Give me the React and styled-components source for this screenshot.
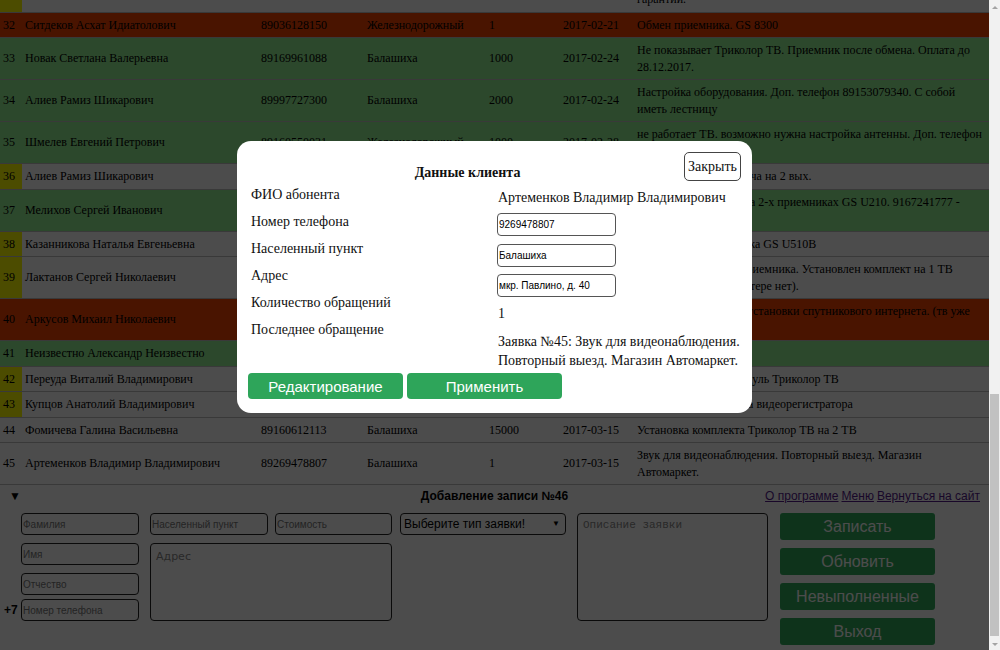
import React from 'react';
import styled, { createGlobalStyle } from 'styled-components';

const GlobalStyle = createGlobalStyle`
  html, body { height: 100%; overflow: hidden; }
  body {
    margin: 0;
    background: #fff;
    color: #000;
    font-family: "Liberation Serif", "Times New Roman", serif;
  }
  #root { height: 100%; }
`;

const ROW_BG = {
  w: '#ffffff',
  r: '#f64300',
  g: '#95f295',
};

const data = [
  ['Борисов Геннадий Иванович', '89261119988', 'Железнодорожный', '2500', '2017-02-15', 'Замена конвертора и разъемов. Доп. телефон 89167770011. Домофон не работает, звонить.', 'g', false],
  ['Григорьев Антон Николаевич', '89030001122', 'Балашиха', '1000', '2017-02-17', 'Не включается приемник. Горит красный индикатор, возможно неисправен блок питания.', 'g', false],
  ['Гусейнов Рустам Алиевич', '89031112233', 'Балашиха', '0', '2017-02-20', 'Не включается приемник. Отвезти в сервисный центр. Ремонт по гарантии.', 'w', true],
  ['Ситдеков Асхат Идиатолович', '89036128150', 'Железнодорожный', '1', '2017-02-21', 'Обмен приемника. GS 8300', 'r', false],
  ['Новак Светлана Валерьевна', '89169961088', 'Балашиха', '1000', '2017-02-24', 'Не показывает Триколор ТВ. Приемник после обмена. Оплата до 28.12.2017.', 'g', false],
  ['Алиев Рамиз Шикарович', '89997727300', 'Балашиха', '2000', '2017-02-24', 'Настройка оборудования. Доп. телефон 89153079340. С собой иметь лестницу', 'g', false],
  ['Шмелев Евгений Петрович', '89160550031', 'Железнодорожный', '1000', '2017-02-28', 'не работает ТВ. возможно нужна настройка антенны. Доп. телефон 89160550001', 'g', false],
  ['Алиев Рамиз Шикарович', '89997727300', 'Балашиха', '2000', '2017-03-01', 'Установка мультисвитча на 2 вых.', 'w', true],
  ['Мелихов Сергей Иванович', '89167241777', 'Балашиха', '3000', '2017-03-02', 'Установка Триколор на 2-х приемниках GS U210. 9167241777 - Ирина', 'g', false],
  ['Казанникова Наталья Евгеньевна', '89031234411', 'Балашиха', '1500', '2017-03-03', 'Ремонт и перепрошивка GS U510B', 'w', true],
  ['Лактанов Сергей Николаевич', '89265550099', 'Балашиха', '1000', '2017-03-06', 'Не работает кнопка приемника. Установлен комплект на 1 ТВ (интернета на компьютере нет).', 'w', true],
  ['Аркусов Михаил Николаевич', '89164440022', 'Железнодорожный', '1', '2017-03-07', 'Консультация насчет установки спутникового интернета. (тв уже установлено)', 'r', false],
  ['Неизвестно Александр Неизвестно', '89990001111', 'Балашиха', '1', '2017-03-09', 'Настройка каналов', 'g', false],
  ['Переуда Виталий Владимирович', '89036663322', 'Балашиха', '1000', '2017-03-10', 'Не работает CAM-модуль Триколор ТВ', 'w', true],
  ['Купцов Анатолий Владимирович', '89162229900', 'Балашиха', '2000', '2017-03-13', 'Установка и настройка видеорегистратора', 'w', true],
  ['Фомичева Галина Васильевна', '89160612113', 'Балашиха', '15000', '2017-03-15', 'Установка комплекта Триколор ТВ на 2 ТВ', 'w', false],
  ['Артеменков Владимир Владимирович', '89269478807', 'Балашиха', '1', '2017-03-15', 'Звук для видеонаблюдения. Повторный выезд. Магазин Автомаркет.', 'w', false],
];

const rows = data.map((r, i) => ({
  n: i + 29,
  name: r[0],
  phone: r[1],
  town: r[2],
  cost: r[3],
  date: r[4],
  desc: r[5],
  status: r[6],
  mark: r[7],
}));

const Shell = styled.div`
  display: flex;
  height: 100vh;
`;

const MainArea = styled.div`
  position: relative;
  flex: 1;
  min-width: 0;
  display: flex;
  flex-direction: column;
  overflow: hidden;
`;

const TableViewport = styled.div`
  flex: 1;
  min-height: 0;
  overflow: hidden;
  display: flex;
  flex-direction: column;
  justify-content: flex-end;
`;

const Table = styled.table`
  flex: none;
  width: 100%;
  border-collapse: collapse;
  table-layout: fixed;
  font-size: 12px;
  line-height: 16.5px;
`;

const Row = styled.tr`
  background: ${(p) => ROW_BG[p.$status]};
`;

const Cell = styled.td`
  padding: 4px 4px 4px 3px;
  border-bottom: 1px solid rgba(0, 0, 0, 0.25);
  vertical-align: middle;
  overflow: hidden;
`;

const NumCell = styled(Cell)`
  background: ${(p) => (p.$mark ? '#ffff00' : 'transparent')};
`;

const ScrollTrack = styled.div`
  flex: none;
  width: 11px;
  background: #f1f1f1;
  display: flex;
  flex-direction: column;
  align-items: center;
`;

const ScrollArrow = styled.div`
  flex: none;
  height: ${(p) => (p.$down ? 12 : 14)}px;
  display: flex;
  align-items: center;
  justify-content: center;
  &::before {
    content: '';
    width: 0;
    height: 0;
    border-left: 3px solid transparent;
    border-right: 3px solid transparent;
    ${(p) => (p.$down ? 'border-top: 3px solid #a3a3a3;' : 'border-bottom: 3px solid #a3a3a3;')}
  }
`;

const ScrollSpace = styled.div`
  flex: 1;
`;

const ScrollThumb = styled.div`
  flex: none;
  width: 9px;
  height: 242px;
  margin-bottom: 2px;
  background: #c1c1c1;
`;

const Panel = styled.footer`
  flex: none;
  height: 165px;
  background: #fff;
  font-family: "Liberation Sans", Arial, sans-serif;
`;

const PanelHead = styled.div`
  display: grid;
  grid-template-columns: 1fr auto 1fr;
  align-items: center;
  height: 22px;
  padding: 0 9px;
  font-size: 12px;
`;

const Toggle = styled.span`
  font-size: 12px;
`;

const PanelTitle = styled.b`
  font-size: 12px;
`;

const Links = styled.nav`
  justify-self: end;
  display: flex;
  gap: 3px;
  font-size: 12px;
`;

const Link = styled.a`
  color: #551a8b;
  text-decoration: underline;
`;

const PanelBody = styled.div`
  display: flex;
  align-items: flex-start;
  padding: 6px 0 0 4px;
`;

const NameColumn = styled.div`
  display: flex;
  flex-direction: column;
  gap: 8px;
`;

const FieldRow = styled.div`
  display: flex;
  align-items: center;
  margin-top: ${(p) => (p.$tight ? '-4px' : '0')};
`;

const Prefix = styled.span`
  width: 17px;
  font-size: 12px;
  font-weight: bold;
`;

const TextInput = styled.input`
  box-sizing: border-box;
  width: ${(p) => p.$w || 118}px;
  height: 22px;
  margin: 0;
  border: 1px solid #222;
  border-radius: 4px;
  padding: 0 1px;
  font-family: "Liberation Sans", Arial, sans-serif;
  font-size: 10px;
  background: #fff;
  &::placeholder { color: #777; }
`;

const AddressBlock = styled.div`
  display: grid;
  grid-template-columns: 118px 117px;
  column-gap: 7px;
  row-gap: 8px;
  margin-left: 11px;
`;

const Area = styled.textarea`
  box-sizing: border-box;
  resize: none;
  border: 1px solid #222;
  border-radius: 4px;
  background: #fff;
  margin: 0;
  padding: ${(p) => (p.$mono ? '5px' : '6px 5px')};
  width: ${(p) => p.$w}px;
  height: ${(p) => p.$h}px;
  grid-column: ${(p) => (p.$span ? '1 / span 2' : 'auto')};
  margin-left: ${(p) => p.$ml || 0}px;
  font-family: ${(p) => (p.$mono ? '"Liberation Mono", "DejaVu Sans Mono", monospace' : '"DejaVu Sans", "Liberation Sans", sans-serif')};
  font-size: 11px;
  &::placeholder { color: #888; }
`;

const SelectWrap = styled.div`
  position: relative;
  margin-left: 8px;
`;

const Select = styled.select`
  appearance: none;
  box-sizing: border-box;
  width: 166px;
  height: 22px;
  margin: 0;
  border: 1px solid #222;
  border-radius: 4px;
  background: #fff;
  padding: 0 3px;
  font-family: "Liberation Sans", Arial, sans-serif;
  font-size: 12px;
  color: #000;
`;

const SelectArrow = styled.span`
  position: absolute;
  right: 6px;
  top: 6px;
  font-size: 8px;
  pointer-events: none;
`;

const ActionColumn = styled.div`
  display: flex;
  flex-direction: column;
  gap: 8px;
  margin-left: 12px;
`;

const DarkButton = styled.button`
  width: 155px;
  height: 27px;
  border: 0;
  border-radius: 3px;
  background: #30ab5d;
  color: #fff;
  font-family: "Liberation Sans", Arial, sans-serif;
  font-size: 16px;
  padding: 0;
`;

const Overlay = styled.div`
  position: absolute;
  top: 0;
  left: 0;
  right: 0;
  bottom: 0;
  z-index: 10;
  padding-top: 141px;
  background-color: rgba(0, 0, 0, 0.7);
`;

const Modal = styled.section`
  position: relative;
  width: 515px;
  margin: 0 auto;
  background: #fff;
  border-radius: 14px;
  padding-bottom: 14px;
  color: #111;
  font-family: "Liberation Serif", "Times New Roman", serif;
  font-size: 14px;
`;

const ModalHead = styled.header`
  display: flex;
  align-items: flex-end;
  padding: 11px 11px 0 14px;
`;

const ModalTitle = styled.h2`
  flex: 1;
  margin: 0;
  text-align: center;
  font-size: 14px;
  line-height: 17px;
  font-weight: bold;
`;

const CloseButton = styled.button`
  height: 29px;
  padding: 0 3px;
  border: 1px solid #444;
  border-radius: 5px;
  background: #fff;
  color: #111;
  font-family: "Liberation Serif", "Times New Roman", serif;
  font-size: 14px;
`;

const ModalBody = styled.div`
  display: grid;
  grid-template-columns: 247px 1fr;
  padding: 0 12px 0 14px;
`;

const Labels = styled.div`
  display: flex;
  flex-direction: column;
`;

const Label = styled.div`
  line-height: 27px;
`;

const Values = styled.div`
  display: flex;
  flex-direction: column;
  padding-top: 2px;
`;

const NameValue = styled.div`
  line-height: 30px;
`;

const Fields = styled.div`
  display: flex;
  flex-direction: column;
  gap: 7.5px;
`;

const Field = styled.input`
  box-sizing: border-box;
  width: 119px;
  height: 23px;
  margin: 0 0 0 -1px;
  border: 1px solid #555;
  border-radius: 4px;
  padding: 0 1px;
  font-family: "Liberation Sans", Arial, sans-serif;
  font-size: 10px;
  color: #000;
  background: #fff;
`;

const CountValue = styled.div`
  margin-top: 4px;
  line-height: 26px;
`;

const LastValue = styled.div`
  margin-top: 5px;
  line-height: 19px;
`;

const ModalActions = styled.div`
  display: flex;
  gap: 4px;
  padding: 3px 0 0 11px;
`;

const GreenButton = styled.button`
  width: 155px;
  height: 26px;
  border: 0;
  border-radius: 4px;
  background: #2ea55a;
  color: #fff;
  font-family: "Liberation Sans", Arial, sans-serif;
  font-size: 15px;
  padding: 0;
`;

const labels = [
  'ФИО абонента',
  'Номер телефона',
  'Населенный пункт',
  'Адрес',
  'Количество обращений',
  'Последнее обращение',
];

export default function App() {
  return (
    <>
      <GlobalStyle />
      <Shell>
        <MainArea>
          <TableViewport>
            <Table>
              <colgroup>
                <col style={{ width: 22 }} />
                <col style={{ width: 236 }} />
                <col style={{ width: 106 }} />
                <col style={{ width: 122 }} />
                <col style={{ width: 74 }} />
                <col style={{ width: 74 }} />
                <col />
              </colgroup>
              <tbody>
                {rows.map((r) => (
                  <Row key={r.n} $status={r.status}>
                    <NumCell $mark={r.mark}>{r.n}</NumCell>
                    <Cell>{r.name}</Cell>
                    <Cell>{r.phone}</Cell>
                    <Cell>{r.town}</Cell>
                    <Cell>{r.cost}</Cell>
                    <Cell>{r.date}</Cell>
                    <Cell>{r.desc}</Cell>
                  </Row>
                ))}
              </tbody>
            </Table>
          </TableViewport>

          <Panel>
            <PanelHead>
              <Toggle>▼</Toggle>
              <PanelTitle>Добавление записи №46</PanelTitle>
              <Links>
                <Link href="#about">О программе</Link>
                <Link href="#menu">Меню</Link>
                <Link href="#site">Вернуться на сайт</Link>
              </Links>
            </PanelHead>
            <PanelBody>
              <NameColumn>
                <FieldRow><Prefix /><TextInput placeholder="Фамилия" /></FieldRow>
                <FieldRow><Prefix /><TextInput placeholder="Имя" /></FieldRow>
                <FieldRow><Prefix /><TextInput placeholder="Отчество" /></FieldRow>
                <FieldRow $tight><Prefix>+7</Prefix><TextInput placeholder="Номер телефона" /></FieldRow>
              </NameColumn>
              <AddressBlock>
                <TextInput placeholder="Населенный пункт" />
                <TextInput $w={117} placeholder="Стоимость" />
                <Area $span $w={242} $h={78} placeholder="Адрес" />
              </AddressBlock>
              <SelectWrap>
                <Select defaultValue="">
                  <option value="">Выберите тип заявки!</option>
                </Select>
                <SelectArrow>▼</SelectArrow>
              </SelectWrap>
              <Area $mono $w={191} $h={108} $ml={11} placeholder="Описание заявки" />
              <ActionColumn>
                <DarkButton>Записать</DarkButton>
                <DarkButton>Обновить</DarkButton>
                <DarkButton>Невыполненные</DarkButton>
                <DarkButton>Выход</DarkButton>
              </ActionColumn>
            </PanelBody>
          </Panel>

          <Overlay>
            <Modal>
              <ModalHead>
                <ModalTitle>Данные клиента</ModalTitle>
                <CloseButton>Закрыть</CloseButton>
              </ModalHead>
              <ModalBody>
                <Labels>
                  {labels.map((l) => (
                    <Label key={l}>{l}</Label>
                  ))}
                </Labels>
                <Values>
                  <NameValue>Артеменков Владимир Владимирович</NameValue>
                  <Fields>
                    <Field defaultValue="9269478807" />
                    <Field defaultValue="Балашиха" />
                    <Field defaultValue="мкр. Павлино, д. 40" />
                  </Fields>
                  <CountValue>1</CountValue>
                  <LastValue>Заявка №45: Звук для видеонаблюдения. Повторный выезд. Магазин Автомаркет.</LastValue>
                </Values>
              </ModalBody>
              <ModalActions>
                <GreenButton>Редактирование</GreenButton>
                <GreenButton>Применить</GreenButton>
              </ModalActions>
            </Modal>
          </Overlay>
        </MainArea>

        <ScrollTrack>
          <ScrollArrow />
          <ScrollSpace />
          <ScrollThumb />
          <ScrollArrow $down />
        </ScrollTrack>
      </Shell>
    </>
  );
}
